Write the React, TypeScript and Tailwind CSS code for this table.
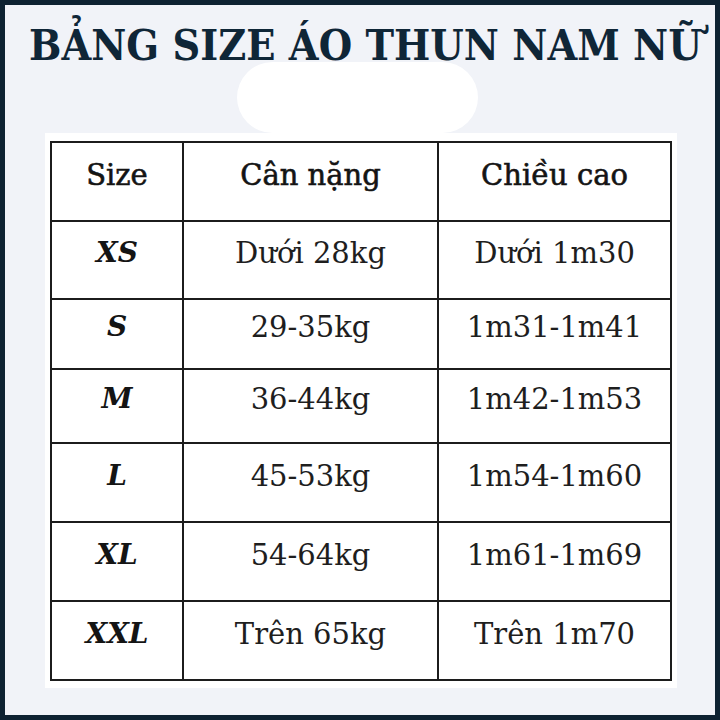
import React from 'react';

// Bảng size áo thun
const rows = [
  { size: 'XS', weight: 'Dưới 28kg', height: 'Dưới 1m30', h: 'h-[78px]' },
  { size: 'S', weight: '29-35kg', height: '1m31-1m41', h: 'h-[70px]' },
  { size: 'M', weight: '36-44kg', height: '1m42-1m53', h: 'h-[74px]' },
  { size: 'L', weight: '45-53kg', height: '1m54-1m60', h: 'h-[79px]' },
  { size: 'XL', weight: '54-64kg', height: '1m61-1m69', h: 'h-[79px]' },
  { size: 'XXL', weight: 'Trên 65kg', height: 'Trên 1m70', h: 'h-[77px]' },
];

const serif = "font-['DejaVu_Serif','Liberation_Serif',serif]";

const Cell: React.FC<{ children: React.ReactNode; className?: string; last?: boolean }> = ({ children, className = '', last }) => (
  <div className={`flex items-center justify-center pb-[14px] leading-[34px] ${last ? '' : 'border-r-2 border-[#1c1c1c]'} ${className}`}>
    {children}
  </div>
);

export default function App() {
  return (
    <div className="w-[720px] h-[720px] border-[5px] border-[#0e2232] bg-[#f1f3f8] flex flex-col overflow-hidden">
      {/* Title */}
      <div className="h-[57px] pt-[19px] pl-[24px] flex">
        <h1 className="font-['DejaVu_Serif',serif] font-bold text-[43px] leading-[43px] origin-left scale-x-[0.893] text-[#0f2637] whitespace-nowrap">
          BẢNG SIZE ÁO THUN NAM NỮ
        </h1>
      </div>

      {/* white blob */}
      <div className="ml-[232px] w-[241px] h-[71px] rounded-[36px] bg-white" />

      {/* Table panel */}
      <div className="ml-[40px] w-[632px] h-[555px] bg-white px-[5px] pt-[8px] pb-[7px]">
        <div className={`border-2 border-[#1c1c1c] text-[29px] text-[#1e1e1e] ${serif}`}>
          <div className="grid grid-cols-[132px_255px_231px] h-[79px] border-b-2 border-[#1c1c1c] [-webkit-text-stroke:0.6px_currentColor] text-[#141414]">
            <Cell>Size</Cell>
            <Cell>Cân nặng</Cell>
            <Cell last>Chiều cao</Cell>
          </div>
          {rows.map((r, i) => (
            <div
              key={r.size}
              className={`grid grid-cols-[132px_255px_231px] ${r.h} ${i < rows.length - 1 ? 'border-b-2 border-[#1c1c1c]' : ''}`}
            >
              <Cell className="font-bold italic text-[28px] text-[#141414]">{r.size}</Cell>
              <Cell>{r.weight}</Cell>
              <Cell last>{r.height}</Cell>
            </div>
          ))}
        </div>
      </div>
    </div>
  );
}
